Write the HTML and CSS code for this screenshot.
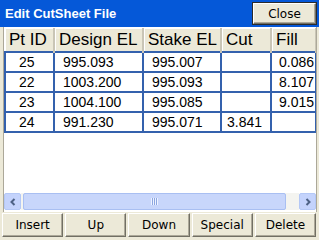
FILE: index.html
```html
<!DOCTYPE html>
<html lang="en">
<head>
    <meta charset="UTF-8">
    <title>Edit CutSheet File</title>
    <link rel="stylesheet" href="styles.css">
</head>
<body>
    <div class="window">
        <div class="titlebar">
            <span class="title">Edit CutSheet File</span>
            <button class="btn close">Close</button>
        </div>

        <div class="list">
            <div class="grid">
                <table>
                    <colgroup>
                        <col class="c-id">
                        <col class="c-design">
                        <col class="c-stake">
                        <col class="c-cut">
                        <col class="c-fill">
                    </colgroup>
                    <thead>
                        <tr>
                            <th>Pt ID</th>
                            <th>Design EL</th>
                            <th>Stake EL</th>
                            <th>Cut</th>
                            <th>Fill</th>
                        </tr>
                    </thead>
                    <tbody>
                        <tr><td>25</td><td>995.093</td><td>995.007</td><td class="num"></td><td class="num">0.086</td></tr>
                        <tr><td>22</td><td>1003.200</td><td>995.093</td><td class="num"></td><td class="num">8.107</td></tr>
                        <tr><td>23</td><td>1004.100</td><td>995.085</td><td class="num"></td><td class="num">9.015</td></tr>
                        <tr><td>24</td><td>991.230</td><td>995.071</td><td class="num">3.841</td><td class="num"></td></tr>
                    </tbody>
                </table>
            </div>
            <div class="hscroll">
                <div class="arrow">
                    <svg width="8" height="8" viewBox="0 0 8 8"><path d="M5.5 1 L2.5 4 L5.5 7" fill="none" stroke="#4d6185" stroke-width="2"/></svg>
                </div>
                <div class="track">
                    <div class="thumb"><span class="grip"></span></div>
                </div>
                <div class="arrow">
                    <svg width="8" height="8" viewBox="0 0 8 8"><path d="M2.5 1 L5.5 4 L2.5 7" fill="none" stroke="#4d6185" stroke-width="2"/></svg>
                </div>
            </div>
        </div>

        <div class="buttons">
            <button class="btn">Insert</button>
            <button class="btn">Up</button>
            <button class="btn">Down</button>
            <button class="btn">Special</button>
            <button class="btn">Delete</button>
        </div>
    </div>
</body>
</html>
```

FILE: styles.css
```css
body {
    margin: 0;
    font-family: "Liberation Sans", Arial, sans-serif;
}
.window {
    width: 319px;
    height: 240px;
    background-color: #ece9d8;
    display: flex;
    flex-direction: column;
    overflow: hidden;
}
.titlebar {
    height: 27px;
    background-color: #0558d8;
    display: flex;
    align-items: center;
    justify-content: space-between;
    padding: 0 3px 0 5px;
    flex-shrink: 0;
}
.title {
    color: #fff;
    font-weight: bold;
    font-size: 13px;
}
.btn {
    font-family: "DejaVu Sans", sans-serif;
    font-size: 12px;
    color: #000;
    background-color: #ece9d8;
    border: 1px solid;
    border-color: #fff #716f64 #716f64 #fff;
    box-shadow: inset -1px -1px 0 #aca899;
    padding: 0;
}
.close {
    width: 63px;
    height: 21px;
    outline: 1px solid #2b2b2b;
}
.list {
    flex: 1;
    margin: 0 2px 0 3px;
    background-color: #fff;
    border-left: 1px solid #aca899;
    border-right: 1px solid #aca899;
    display: flex;
    flex-direction: column;
    justify-content: space-between;
}
.grid {
    overflow: hidden;
    padding-top: 1px;
}
table {
    border-collapse: collapse;
    table-layout: fixed;
    width: 311px;
    font-size: 14px;
}
.c-id { width: 49px; }
.c-design { width: 89px; }
.c-stake { width: 78px; }
.c-cut { width: 50px; }
.c-fill { width: 45px; }
th {
    height: 23px;
    padding: 0 0 0 4px;
    text-align: left;
    font-weight: normal;
    font-size: 17px;
    background-color: #ece9d8;
    border-right: 2px solid #c9c5b6;
    border-bottom: 1px solid #c9c5b6;
    box-shadow: inset 1px 1px 0 #fff;
    white-space: nowrap;
    overflow: hidden;
}
td {
    height: 18px;
    padding: 0 0 0 8px;
    border: 2px solid #3461ad;
    white-space: nowrap;
    overflow: hidden;
}
td:first-child {
    padding-left: 13px;
}
td.num {
    text-align: right;
    padding: 0 8px 0 0;
}
td.num:last-child {
    padding-right: 1px;
}
.hscroll {
    height: 17px;
    display: flex;
    margin-bottom: 2px;
}
.arrow {
    width: 17px;
    height: 17px;
    box-sizing: border-box;
    background-color: #c4d3fc;
    border: 1px solid #b4c8f6;
    border-radius: 2px;
    display: flex;
    align-items: center;
    justify-content: center;
}
.track {
    flex: 1;
    background-color: #f4f4f0;
    padding: 0 1px;
    display: flex;
}
.thumb {
    flex: 1;
    margin: 0 12px 0 1px;
    background-color: #c8d6fb;
    border: 1px solid #a9bff2;
    border-radius: 2px;
    display: flex;
    align-items: center;
    justify-content: center;
}
.grip {
    width: 7px;
    height: 7px;
    background: repeating-linear-gradient(90deg, #eef3ff 0 1px, #8ca6e0 1px 2px);
}
.buttons {
    height: 28px;
    display: flex;
    gap: 2px;
    padding: 1px 3px 3px 2px;
    box-sizing: border-box;
}
.buttons .btn {
    flex: 1;
}
```
